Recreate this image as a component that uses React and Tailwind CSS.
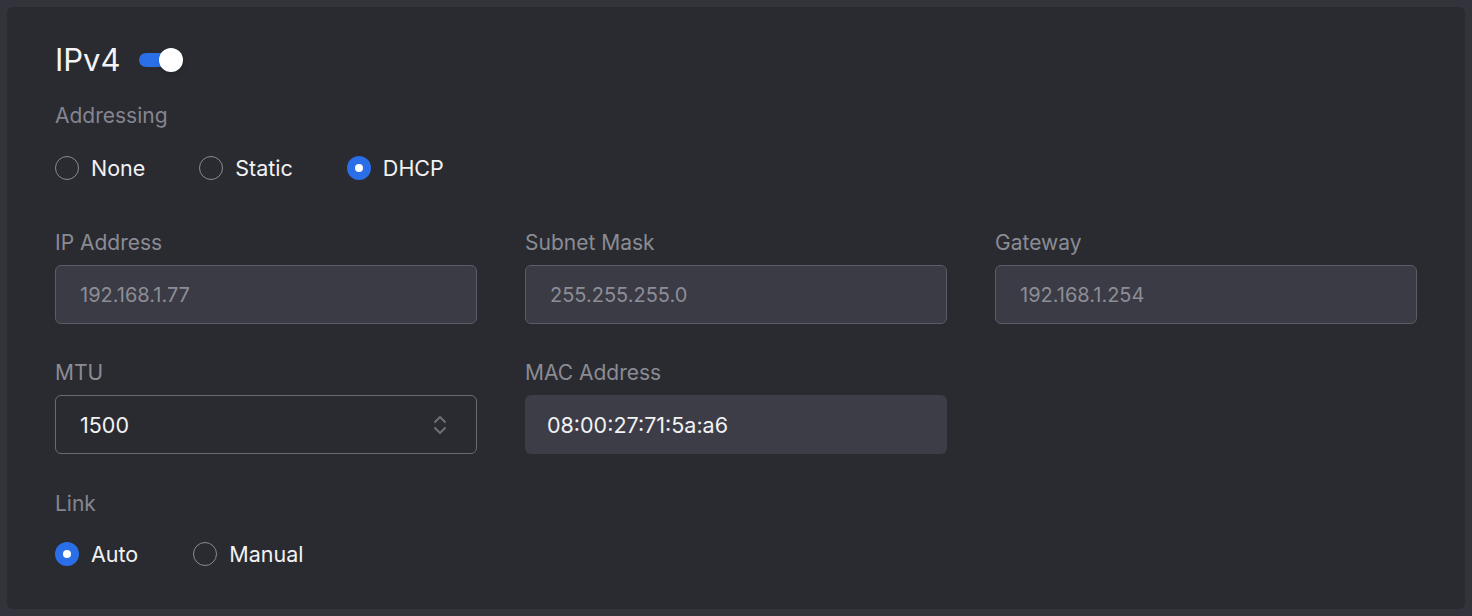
import { ChevronsUpDown } from 'lucide-react'

function Radio({ label, checked }) {
  return (
    <label className="flex items-center gap-[12px]">
      {checked ? (
        <span className="w-6 h-6 rounded-full bg-[#2a6ee8] flex items-center justify-center">
          <span className="w-2 h-2 rounded-full bg-white" />
        </span>
      ) : (
        <span className="w-6 h-6 rounded-full border-[1.5px] border-[#8a8a92]" />
      )}
      <span className="text-[21.5px] text-[#f2f2f4]">{label}</span>
    </label>
  )
}

function Field({ label, value }) {
  return (
    <div className="flex flex-col gap-[10px]">
      <span className="text-[21px] text-[#8b8b94] leading-6">{label}</span>
      <div className="h-[59px] rounded-md bg-[#3b3b45] border border-[#5c5c66] flex items-center px-6 text-[20px] text-[#8d8d96]">
        {value}
      </div>
    </div>
  )
}

export default function App() {
  return (
    <div className="w-[1472px] h-[616px] bg-[#33333b] p-[7px]" style={{ fontFamily: 'Inter, "Noto Sans", sans-serif' }}>
      <div className="h-full rounded-md bg-[#2a2b31] px-12 pt-[31px]">
        <div className="flex items-center gap-[18px]">
          <h1 className="text-[31px] text-[#f4f4f6] leading-[44px]">IPv4</h1>
          <div className="relative w-[44px] h-6 flex items-center">
            <div className="w-[34px] h-[14px] rounded-full bg-[#2a6ee8]" />
            <div className="absolute right-0 w-6 h-6 rounded-full bg-white shadow-md" />
          </div>
        </div>
        <div className="mt-[20px] text-[21px] text-[#85858f] leading-7">Addressing</div>
        <div className="mt-[22px] flex gap-[54px]">
          <Radio label="None" />
          <Radio label="Static" />
          <Radio label="DHCP" checked />
        </div>
        <div className="mt-[47px] grid grid-cols-3 gap-x-12 gap-y-[37px]">
          <Field label="IP Address" value="192.168.1.77" />
          <Field label="Subnet Mask" value="255.255.255.0" />
          <Field label="Gateway" value="192.168.1.254" />
          <div className="flex flex-col gap-[10px]">
            <span className="text-[21px] text-[#8b8b94] leading-6">MTU</span>
            <div className="h-[59px] rounded-md border border-[#6a6a74] flex items-center justify-between pl-6 pr-6 text-[21.5px] text-[#f2f2f4]">
              1500
              <ChevronsUpDown className="w-6 h-6 text-[#6e6e78]" strokeWidth={2} />
            </div>
          </div>
          <div className="flex flex-col gap-[10px]">
            <span className="text-[21px] text-[#8b8b94] leading-6">MAC Address</span>
            <div className="h-[59px] rounded-md bg-[#3d3d48] flex items-center px-[22px] text-[21.5px] text-[#f2f2f4]">
              08:00:27:71:5a:a6
            </div>
          </div>
        </div>
        <div className="mt-[36px] text-[21px] text-[#85858f] leading-7">Link</div>
        <div className="mt-[20px] flex gap-[55px]">
          <Radio label="Auto" checked />
          <Radio label="Manual" />
        </div>
      </div>
    </div>
  )
}
